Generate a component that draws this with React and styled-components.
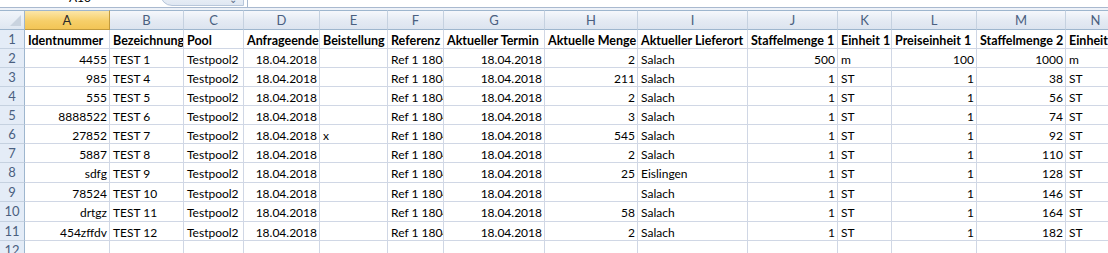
import React from "react";
import styled, { createGlobalStyle } from "styled-components";

const GlobalStyle = createGlobalStyle`
  html, body {
    margin: 0;
    padding: 0;
    background: #ffffff;
    overflow: hidden;
  }
`;

const Window = styled.div`
  width: 1108px;
  height: 253px;
  overflow: hidden;
  display: flex;
  flex-direction: column;
  font-family: "Lato", "Open Sans", sans-serif;
  background: #ffffff;
`;

const FormulaBar = styled.div`
  height: 7px;
  flex: none;
  display: flex;
  border-bottom: 1px solid #a9b9cf;
  background: #ffffff;
  overflow: hidden;
`;

const NameBox = styled.div`
  width: 160px;
  flex: none;
  font-size: 12px;
  color: #000;
  text-align: center;
  line-height: 12px;
  margin-top: -8px;
`;

const Pill = styled.div`
  width: 84px;
  flex: none;
  margin-top: -12px;
  height: 18px;
  border: 1px solid #b7c6da;
  border-radius: 0 0 0 12px;
  background: linear-gradient(#f4f7fb, #dfe7f2);
  display: flex;
  justify-content: flex-end;
  align-items: flex-end;
  padding-right: 6px;
  box-sizing: border-box;
  font-size: 10px;
  color: #5a6b85;
`;

const FormulaInput = styled.div`
  flex: 1;
  border-left: 1px solid #a9b9cf;
  margin-left: 3px;
`;

const Gap = styled.div`
  height: 2px;
  flex: none;
  background: #eef2f8;
`;

const Sheet = styled.div`
  display: grid;
  grid-template-columns: ${(p) => p.cols};
  grid-template-rows: ${(p) => p.rows};
  width: max-content;
`;

const Corner = styled.div`
  background: linear-gradient(#f1f5fa, #dfe7f1);
  border-right: 1px solid #9eb6ce;
  border-bottom: 1px solid #9eb6ce;
  border-top: 1px solid #9eb6ce;
  position: relative;
  overflow: hidden;
  &::after {
    content: "";
    position: absolute;
    right: 3px;
    bottom: 3px;
    width: 0;
    height: 0;
    border-left: 11px solid transparent;
    border-bottom: 11px solid #c9d3df;
  }
`;

const ColHead = styled.div`
  display: flex;
  align-items: center;
  justify-content: center;
  border-top: 1px solid #9eb6ce;
  border-bottom: 1px solid ${(p) => (p.active ? "#c29b3d" : "#9eb6ce")};
  border-right: 1px solid ${(p) => (p.active ? "#c29b3d" : "#c5d1e0")};
  background: ${(p) =>
    p.active
      ? "linear-gradient(#fbe6a8, #f6cf69 55%, #f3c556)"
      : "linear-gradient(#f6f8fc, #e4eaf3 55%, #dce4ef)"};
  color: ${(p) => (p.active ? "#2b2b2b" : "#4a5f80")};
  font-size: 13px;
  line-height: 1;
  overflow: hidden;
  white-space: nowrap;
`;

const RowHead = styled.div`
  display: flex;
  align-items: center;
  justify-content: center;
  border-right: 1px solid #9eb6ce;
  border-bottom: 1px solid #c5d1e0;
  background: #e4ecf7;
  color: #4a5f80;
  font-size: 13px;
  line-height: 1;
  overflow: hidden;
`;

const Cell = styled.div`
  display: flex;
  align-items: center;
  justify-content: ${(p) => (p.num ? "flex-end" : "flex-start")};
  padding: 2px 2px 0 3px;
  border-right: 1px solid #d0d7e5;
  border-bottom: 1px solid #d0d7e5;
  font-size: ${(p) => (p.bold ? "12.5px" : "12px")};
  font-weight: ${(p) => (p.bold ? 700 : 400)};
  color: #000;
  white-space: nowrap;
  overflow: hidden;
  min-width: 0;
  box-sizing: border-box;
`;

const letters = ["A", "B", "C", "D", "E", "F", "G", "H", "I", "J", "K", "L", "M", "N"];
const widths = [25, 85, 74, 60, 76, 68, 56, 101, 93, 110, 90, 54, 85, 89, 60];
const heights = [20, 19, 19, 19, 19, 19, 19, 19, 20, 19, 20, 19, 19];

const header = [
  "Identnummer",
  "Bezeichnung",
  "Pool",
  "Anfrageende",
  "Beistellung",
  "Referenz",
  "Aktueller Termin",
  "Aktuelle Menge",
  "Aktueller Lieferort",
  "Staffelmenge 1",
  "Einheit 1",
  "Preiseinheit 1",
  "Staffelmenge 2",
  "Einheit 2",
];

// [ident, bez, beistellung, menge, ort, staffel1, einheit1, preis1, staffel2, einheit2]
const data = [
  ["4455", "TEST 1", "", "2", "Salach", "500", "m", "100", "1000", "m"],
  ["985", "TEST 4", "", "211", "Salach", "1", "ST", "1", "38", "ST"],
  ["555", "TEST 5", "", "2", "Salach", "1", "ST", "1", "56", "ST"],
  ["8888522", "TEST 6", "", "3", "Salach", "1", "ST", "1", "74", "ST"],
  ["27852", "TEST 7", "x", "545", "Salach", "1", "ST", "1", "92", "ST"],
  ["5887", "TEST 8", "", "2", "Salach", "1", "ST", "1", "110", "ST"],
  ["sdfg", "TEST 9", "", "25", "Eislingen", "1", "ST", "1", "128", "ST"],
  ["78524", "TEST 10", "", "", "Salach", "1", "ST", "1", "146", "ST"],
  ["drtgz", "TEST 11", "", "58", "Salach", "1", "ST", "1", "164", "ST"],
  ["454zffdv", "TEST 12", "", "2", "Salach", "1", "ST", "1", "182", "ST"],
];

function toCells(r) {
  return [
    { v: r[0], num: true },
    { v: r[1] },
    { v: "Testpool2" },
    { v: "18.04.2018", num: true },
    { v: r[2] },
    { v: "Ref 1 18042018" },
    { v: "18.04.2018", num: true },
    { v: r[3], num: true },
    { v: r[4] },
    { v: r[5], num: true },
    { v: r[6] },
    { v: r[7], num: true },
    { v: r[8], num: true },
    { v: r[9] },
  ];
}

export default function App() {
  return (
    <Window>
      <GlobalStyle />
      <FormulaBar>
        <NameBox>A10</NameBox>
        <Pill>⌄</Pill>
        <FormulaInput />
      </FormulaBar>
      <Gap />
      <Sheet
        cols={widths.map((w) => w + "px").join(" ")}
        rows={heights.map((h) => h + "px").join(" ")}
      >
        <Corner />
        {letters.map((l) => (
          <ColHead key={l} active={l === "A"}>
            {l}
          </ColHead>
        ))}

        <RowHead>1</RowHead>
        {header.map((h, i) => (
          <Cell key={"h" + i} bold>
            {h}
          </Cell>
        ))}

        {data.map((row, ri) => (
          <React.Fragment key={ri}>
            <RowHead>{ri + 2}</RowHead>
            {toCells(row).map((c, ci) => (
              <Cell key={ci} num={c.num}>
                {c.v}
              </Cell>
            ))}
          </React.Fragment>
        ))}

        <RowHead>12</RowHead>
        {letters.map((l) => (
          <Cell key={"e" + l} />
        ))}
      </Sheet>
    </Window>
  );
}
